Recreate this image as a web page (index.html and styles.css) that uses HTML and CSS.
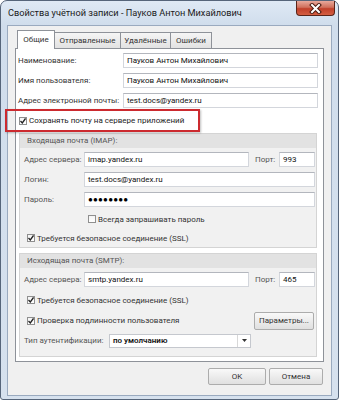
FILE: index.html
```html
<!DOCTYPE html>
<html lang="ru">
<head>
    <meta charset="UTF-8">
    <title>Свойства учётной записи</title>
    <link rel="stylesheet" href="styles.css">
</head>
<body>
<div class="window">
    <div class="titlebar">
        <span class="title">Свойства учётной записи - Пауков Антон Михайлович</span>
        <div class="close">
            <svg width="13" height="11" viewBox="0 0 13 11">
                <path d="M3 2 L10 9 M10 2 L3 9" stroke="#4a1a10" stroke-width="4" stroke-linecap="square"/>
                <path d="M3 2 L10 9 M10 2 L3 9" stroke="#fff" stroke-width="2" stroke-linecap="square"/>
            </svg>
        </div>
    </div>

    <div class="client">
        <div class="tabs">
            <div class="tab active">Общие</div>
            <div class="tab t-sent">Отправленные</div>
            <div class="tab t-del">Удалённые</div>
            <div class="tab t-err">Ошибки</div>
        </div>

        <div class="panel">
            <div class="row">
                <span class="label">Наименование:</span>
                <div class="field">Пауков Антон Михайлович</div>
            </div>
            <div class="row">
                <span class="label">Имя пользователя:</span>
                <div class="field">Пауков Антон Михайлович</div>
            </div>
            <div class="row">
                <span class="label">Адрес электронной почты:</span>
                <div class="field">test.docs@yandex.ru</div>
            </div>
            <div class="check save">
                <span class="box"><svg width="6" height="6" viewBox="0 0 6 6"><path d="M0.5 3 L2.3 5 L5.5 0.5" fill="none" stroke="#222" stroke-width="1.3"/></svg></span>
                Сохранять почту на сервере приложений
            </div>

            <div class="group">
                <div class="group-head">Входящая почта (IMAP):</div>
                <div class="group-body">
                    <div class="grow">
                        <span class="glabel">Адрес сервера:</span>
                        <div class="field">imap.yandex.ru</div>
                        <span class="port-label">Порт:</span>
                        <div class="field port">993</div>
                    </div>
                    <div class="grow">
                        <span class="glabel">Логин:</span>
                        <div class="field">test.docs@yandex.ru</div>
                    </div>
                    <div class="grow">
                        <span class="glabel">Пароль:</span>
                        <div class="field dots">●●●●●●●●</div>
                    </div>
                    <div class="check ask">
                        <span class="box"></span>
                        Всегда запрашивать пароль
                    </div>
                    <div class="check ssl">
                        <span class="box"><svg width="6" height="6" viewBox="0 0 6 6"><path d="M0.5 3 L2.3 5 L5.5 0.5" fill="none" stroke="#222" stroke-width="1.3"/></svg></span>
                        Требуется безопасное соединение (SSL)
                    </div>
                </div>
            </div>

            <div class="group smtp">
                <div class="group-head">Исходящая почта (SMTP):</div>
                <div class="group-body">
                    <div class="grow">
                        <span class="glabel">Адрес сервера:</span>
                        <div class="field">smtp.yandex.ru</div>
                        <span class="port-label">Порт:</span>
                        <div class="field port">465</div>
                    </div>
                    <div class="check ssl2">
                        <span class="box"><svg width="6" height="6" viewBox="0 0 6 6"><path d="M0.5 3 L2.3 5 L5.5 0.5" fill="none" stroke="#222" stroke-width="1.3"/></svg></span>
                        Требуется безопасное соединение (SSL)
                    </div>
                    <div class="check auth">
                        <span class="box"><svg width="6" height="6" viewBox="0 0 6 6"><path d="M0.5 3 L2.3 5 L5.5 0.5" fill="none" stroke="#222" stroke-width="1.3"/></svg></span>
                        Проверка подлинности пользователя
                        <div class="btn params">Параметры...</div>
                    </div>
                    <div class="grow type">
                        <span class="tlabel">Тип аутентификации:</span>
                        <div class="select">
                            <span class="select-text">по умолчанию</span>
                            <span class="select-arrow">
                                <svg width="5" height="3" viewBox="0 0 5 3"><path d="M0 0 H5 L2.5 3 Z" fill="#333"/></svg>
                            </span>
                        </div>
                    </div>
                </div>
            </div>
        </div>

        <div class="actions">
            <div class="btn ok">OK</div>
            <div class="btn cancel">Отмена</div>
        </div>
    </div>

    <div class="highlight"></div>
</div>
</body>
</html>
```

FILE: styles.css
```css
body {
    margin: 0;
    background-color: #fff;
    font-family: Roboto, "Noto Sans", sans-serif;
    font-size: 8px;
    color: #333;
    white-space: nowrap;
}
.window {
    position: relative;
    width: 339px;
    height: 400px;
    box-sizing: border-box;
    border: 1px solid #56657a;
    border-radius: 7px 7px 3px 3px;
    background: linear-gradient(#dfe9f5, #d0ddec 24px, #d6e1ee);
    padding: 0 6px 3px 6px;
    display: flex;
    flex-direction: column;
}
.titlebar {
    height: 24px;
    display: flex;
    align-items: flex-start;
}
.title {
    margin: 6px 0 0 1px;
    font-size: 9.2px;
    line-height: 12px;
    color: #1b1b1b;
}
.close {
    margin-left: auto;
    margin-right: -3px;
    width: 39px;
    height: 15px;
    box-sizing: border-box;
    border: 1px solid #5a2418;
    border-top: none;
    border-radius: 0 0 4px 4px;
    background: linear-gradient(#e8a99c, #d0705c 45%, #c1402a 55%, #d45e42);
    display: flex;
    align-items: center;
    justify-content: center;
}
.client {
    flex: 1;
    background-color: #f0f0f0;
    border: 1px solid #9aaabf;
    padding: 4px 7px 0 7px;
}
.tabs {
    display: flex;
    align-items: flex-end;
    height: 18px;
    padding-left: 2px;
}
.tab {
    height: 16px;
    box-sizing: border-box;
    border: 1px solid #8e9299;
    border-bottom: none;
    margin-left: -1px;
    background: linear-gradient(#f5f5f5, #e2e2e2);
    text-align: center;
    line-height: 15px;
    color: #333;
}
.tab.active {
    position: relative;
    z-index: 1;
    height: 19px;
    margin: 0 0 -1px 0;
    width: 38px;
    background: #fff;
    line-height: 18px;
}
.t-sent { width: 67px; }
.t-del { width: 51px; }
.t-err { width: 42px; }

.panel {
    height: 314px;
    box-sizing: border-box;
    border: 1px solid #8e9299;
    background-color: #fff;
    padding: 1px 5px 0 2px;
}
.row, .grow {
    display: flex;
    align-items: center;
    height: 20px;
}
.label {
    width: 105px;
    flex-shrink: 0;
}
.field {
    flex: 1;
    height: 15px;
    box-sizing: border-box;
    border: 1px solid #d3d6dc;
    border-top-color: #b3b6bd;
    background-color: #fff;
    padding: 0 3px;
    line-height: 13px;
    color: #111;
    overflow: hidden;
}
.dots {
    font-size: 8px;
    letter-spacing: 0.2px;
    color: #000;
}
.check {
    display: flex;
    align-items: center;
}
.box {
    width: 8px;
    height: 8px;
    box-sizing: border-box;
    border: 1px solid #8f8f8f;
    background: linear-gradient(#f4f4f4, #fff);
    margin-right: 2px;
    display: flex;
    align-items: center;
    justify-content: center;
}
.save {
    height: 21px;
    padding-left: 1px;
    color: #222;
}

.group {
    margin: 2px 1px 0 1px;
    border: 1px solid #d4d4d4;
    background-color: #f1f1f1;
}
.group.smtp {
    margin-top: 5px;
}
.group-head {
    height: 14px;
    line-height: 14px;
    padding-left: 7px;
    background-color: #e2e2e2;
    color: #555;
}
.group-body {
    padding: 1px 1px 0 4px;
}
.smtp .group-body {
    padding-bottom: 5px;
}
.glabel {
    width: 60px;
    flex-shrink: 0;
    color: #555;
}
.port-label {
    width: 24px;
    margin-left: 6px;
    color: #555;
}
.field.port {
    flex: none;
    width: 36px;
}
.ask {
    height: 20px;
    margin-left: 64px;
}
.ssl {
    height: 18px;
    margin-left: 3px;
}
.ssl2 {
    height: 22px;
    margin-left: 3px;
}
.auth {
    height: 19px;
    margin-left: 3px;
}
.type {
    height: 21px;
}
.tlabel {
    width: 85px;
    flex-shrink: 0;
    color: #555;
}
.select {
    width: 142px;
    height: 14px;
    box-sizing: border-box;
    border: 1px solid #c5c8ce;
    background-color: #fff;
    display: flex;
}
.select-text {
    flex: 1;
    padding-left: 3px;
    line-height: 12px;
    color: #111;
    font-weight: 600;
}
.select-arrow {
    width: 12px;
    border-left: 1px solid #d8d8d8;
    display: flex;
    align-items: center;
    justify-content: center;
}
.btn {
    height: 17px;
    box-sizing: border-box;
    border: 1px solid #acacac;
    border-radius: 2px;
    background: linear-gradient(#f9f9f9, #ececec 50%, #e0e0e0);
    text-align: center;
    line-height: 15px;
    color: #333;
}
.params {
    margin-left: auto;
    margin-right: 1px;
    width: 60px;
    height: 18px;
    line-height: 16px;
}
.actions {
    display: flex;
    justify-content: flex-end;
    gap: 3px;
    margin-top: 6px;
    padding-right: 1px;
}
.ok { width: 58px; }
.cancel { width: 54px; }

.highlight {
    position: absolute;
    left: 4px;
    top: 108px;
    width: 195px;
    height: 23px;
    box-sizing: border-box;
    border: 2px solid #cc2a2f;
    box-shadow: 1px 1px 2px rgba(0, 0, 0, 0.25);
}
```
